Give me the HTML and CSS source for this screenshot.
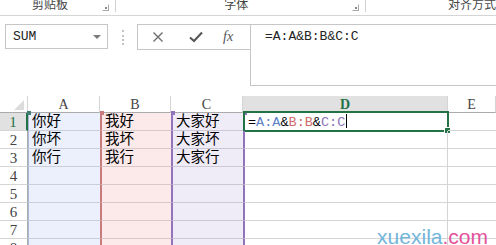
FILE: index.html
```html
<!DOCTYPE html>
<html lang="zh-CN">
<head>
    <meta charset="UTF-8">
    <title>Excel 公式</title>
    <link rel="stylesheet" href="styles.css">
</head>
<body>
    <!-- 功能区分组标题 -->
    <div class="ribbon">
        <div class="group group-clip">
            <span class="group-label">剪贴板</span>
            <span class="launcher"></span>
        </div>
        <div class="group-sep"></div>
        <div class="group group-font">
            <span class="group-label">字体</span>
            <span class="launcher"></span>
        </div>
        <div class="group-sep"></div>
        <div class="group group-align">
            <span class="group-label">对齐方式</span>
        </div>
    </div>

    <!-- 名称框 + 编辑栏 -->
    <div class="formula-row">
        <div class="name-box">
            <span>SUM</span>
            <span class="caret"></span>
        </div>
        <div class="grip"></div>
        <div class="fx-buttons">
            <svg class="btn-icon" width="12" height="12" viewBox="0 0 12 12">
                <path d="M1.5 1.5 L10.5 10.5 M10.5 1.5 L1.5 10.5" stroke="#6d6d6d" stroke-width="1.4" fill="none"/>
            </svg>
            <svg class="btn-icon" width="14" height="12" viewBox="0 0 14 12">
                <path d="M1 6.5 L5 10 L13 1.5" stroke="#555" stroke-width="2" fill="none"/>
            </svg>
            <span class="fx">fx</span>
        </div>
        <div class="formula-input">=A:A&amp;B:B&amp;C:C</div>
    </div>

    <!-- 工作表 -->
    <div class="sheet">
        <div class="corner"></div>
        <div class="ch">A</div>
        <div class="ch">B</div>
        <div class="ch">C</div>
        <div class="ch ch-sel">D</div>
        <div class="ch">E</div>

        <div class="rh rh-sel">1</div>
        <div class="cell col-a first">你好</div>
        <div class="cell col-b first">我好</div>
        <div class="cell col-c first">大家好</div>
        <div class="cell col-d first">
            <span class="active-box"></span>
            <span class="edit">=<span class="ref-a">A:A</span>&amp;<span class="ref-b">B:B</span>&amp;<span class="ref-c">C:C</span><span class="cursor"></span></span>
        </div>
        <div class="cell col-e"></div>

        <div class="rh">2</div>
        <div class="cell col-a">你坏</div>
        <div class="cell col-b">我坏</div>
        <div class="cell col-c">大家坏</div>
        <div class="cell col-d"></div>
        <div class="cell col-e"></div>

        <div class="rh">3</div>
        <div class="cell col-a">你行</div>
        <div class="cell col-b">我行</div>
        <div class="cell col-c">大家行</div>
        <div class="cell col-d"></div>
        <div class="cell col-e"></div>

        <div class="rh">4</div>
        <div class="cell col-a"></div>
        <div class="cell col-b"></div>
        <div class="cell col-c"></div>
        <div class="cell col-d"></div>
        <div class="cell col-e"></div>

        <div class="rh">5</div>
        <div class="cell col-a"></div>
        <div class="cell col-b"></div>
        <div class="cell col-c"></div>
        <div class="cell col-d"></div>
        <div class="cell col-e"></div>

        <div class="rh">6</div>
        <div class="cell col-a"></div>
        <div class="cell col-b"></div>
        <div class="cell col-c"></div>
        <div class="cell col-d"></div>
        <div class="cell col-e"></div>

        <div class="rh">7</div>
        <div class="cell col-a"></div>
        <div class="cell col-b"></div>
        <div class="cell col-c"></div>
        <div class="cell col-d"></div>
        <div class="cell col-e"></div>

        <div class="rh">8</div>
        <div class="cell col-a"></div>
        <div class="cell col-b"></div>
        <div class="cell col-c"></div>
        <div class="cell col-d"></div>
        <div class="cell col-e"></div>
    </div>

    <div class="watermark">xuexila<span>.com</span></div>
</body>
</html>
```

FILE: styles.css
```css
* {
    margin: 0;
    padding: 0;
    box-sizing: border-box;
}

body {
    width: 496px;
    height: 245px;
    overflow: hidden;
    position: relative;
    background-color: #fff;
    font-family: "Liberation Sans", "Noto Sans CJK SC", sans-serif;
    color: #000;
}

/* 功能区 */
.ribbon {
    display: flex;
    height: 16px;
    border-bottom: 1px solid #d5d5d5;
}

.group {
    display: flex;
    align-items: flex-start;
    height: 15px;
}

.group-clip {
    width: 116px;
    padding-left: 32px;
}

.group-font {
    width: 250px;
    padding-left: 108px;
}

.group-align {
    flex: 1;
    padding-left: 82px;
}

.group-label {
    font-family: "Liberation Sans", "Noto Sans CJK SC", sans-serif;
    font-size: 12px;
    line-height: 12px;
    margin-top: -1px;
    color: #444;
    white-space: nowrap;
}

.launcher {
    margin-left: auto;
    margin-right: 6px;
    margin-top: 4px;
    width: 7px;
    height: 7px;
    border: 1px solid #a8a8a8;
    border-top-color: transparent;
    border-left-color: transparent;
    position: relative;
}

.launcher::after {
    content: "";
    position: absolute;
    right: 1px;
    bottom: 1px;
    width: 2px;
    height: 2px;
    background-color: #888;
}

.group-sep {
    width: 1px;
    height: 12px;
    background-color: #d0d0d0;
}

/* 编辑栏 */
.formula-row {
    display: flex;
    align-items: flex-start;
    margin-top: 8px;
}

.name-box {
    display: flex;
    align-items: center;
    margin-left: 5px;
    width: 103px;
    height: 25px;
    padding-left: 7px;
    border: 1px solid #c6c6c6;
    font-family: "Liberation Mono", monospace;
    font-size: 13px;
    color: #222;
}

.caret {
    margin-left: auto;
    margin-right: 6px;
    width: 0;
    height: 0;
    border-left: 4px solid transparent;
    border-right: 4px solid transparent;
    border-top: 4px solid #7a7a7a;
}

.grip {
    margin-left: 14px;
    margin-top: 6px;
    height: 15px;
    border-left: 2px dotted #c2c2c2;
}

.fx-buttons {
    display: flex;
    align-items: center;
    margin-left: 13px;
    width: 113px;
    height: 26px;
    border: 1px solid #c6c6c6;
    border-right: none;
}

.btn-icon:first-child {
    margin-left: 14px;
}

.btn-icon + .btn-icon {
    margin-left: 25px;
}

.fx {
    margin-left: 20px;
    font-family: "Liberation Serif", serif;
    font-style: italic;
    font-size: 14px;
    color: #555;
}

.formula-input {
    flex: 1;
    height: 62px;
    padding-left: 14px;
    border: 1px solid #c6c6c6;
    border-right: none;
    font-family: "Liberation Mono", monospace;
    font-size: 13px;
    line-height: 24px;
    color: #222;
}

/* 工作表 */
.sheet {
    display: grid;
    grid-template-columns: 28px 72px 71px 72px 205px 1fr;
    grid-template-rows: 17px repeat(8, 18px);
    margin-top: 10px;
}

.corner {
    position: relative;
    border-right: 1px solid #d5d5d5;
    border-bottom: 1px solid #ababab;
}

.corner::after {
    content: "";
    position: absolute;
    right: 3px;
    bottom: 2px;
    border-left: 10px solid transparent;
    border-bottom: 10px solid #dcdcdc;
}

.ch {
    border-right: 1px solid #d5d5d5;
    border-bottom: 1px solid #ababab;
    text-align: center;
    font-family: "Liberation Serif", serif;
    font-size: 14px;
    line-height: 17px;
    color: #444;
}

.ch-sel {
    background-color: #e1e1e1;
    border-bottom: 2px solid #217346;
    color: #217346;
    font-weight: bold;
}

.rh {
    border-right: 1px solid #ababab;
    border-bottom: 1px solid #d5d5d5;
    text-align: center;
    font-family: "Liberation Serif", serif;
    font-size: 15px;
    line-height: 18px;
    color: #444;
}

.rh-sel {
    background-color: #e1e1e1;
    border-right: 2px solid #217346;
    color: #217346;
}

.cell {
    position: relative;
    border-bottom: 1px solid rgba(0, 0, 0, 0.14);
    padding-left: 3px;
    font-family: "Liberation Sans", "Noto Sans CJK SC", sans-serif;
    font-size: 14.5px;
    line-height: 17px;
    white-space: nowrap;
}

.col-a {
    background-color: #ebf0fc;
    border-left: 1px solid #a9b8d8;
}

.col-b {
    background-color: #fce9e9;
    border-left: 2px solid #c97b7e;
}

.col-c {
    background-color: #efebf7;
    border-left: 2px solid #9174bb;
}

.col-d {
    border-left: 2px solid #9174bb;
    border-right: 1px solid #d5d5d5;
    border-bottom-color: #d5d5d5;
}

.col-e {
    border-bottom-color: #d5d5d5;
}

/* 引用区域角点 */
.first::before {
    content: "";
    position: absolute;
    top: -2px;
    left: -2px;
    width: 4px;
    height: 4px;
}

.col-a.first::before {
    background-color: #3f7f73;
}

.col-b.first::before {
    background-color: #c97b7e;
}

.col-c.first::before,
.col-d.first::before {
    background-color: #9174bb;
}

/* 活动单元格 */
.active-box {
    position: absolute;
    top: -2px;
    left: -2px;
    right: -2px;
    bottom: -2px;
    border: 2px solid #217346;
}

.active-box::after {
    content: "";
    position: absolute;
    right: -4px;
    bottom: -4px;
    width: 5px;
    height: 5px;
    background-color: #217346;
    border: 1px solid #fff;
}

.edit {
    position: relative;
    font-family: "Liberation Mono", monospace;
    font-size: 13.5px;
    line-height: 17px;
    color: #000;
}

.ref-a {
    color: #5b82c6;
}

.ref-b {
    color: #cf6c6c;
}

.ref-c {
    color: #8c73b6;
}

.cursor {
    display: inline-block;
    width: 1px;
    height: 14px;
    margin-left: 1px;
    vertical-align: -2px;
    background-color: #000;
}

.watermark {
    position: absolute;
    right: 8px;
    bottom: -4px;
    font-family: "Liberation Sans", sans-serif;
    font-size: 21px;
    color: #73b6dc;
}

.watermark span {
    color: #e3529c;
}
```
